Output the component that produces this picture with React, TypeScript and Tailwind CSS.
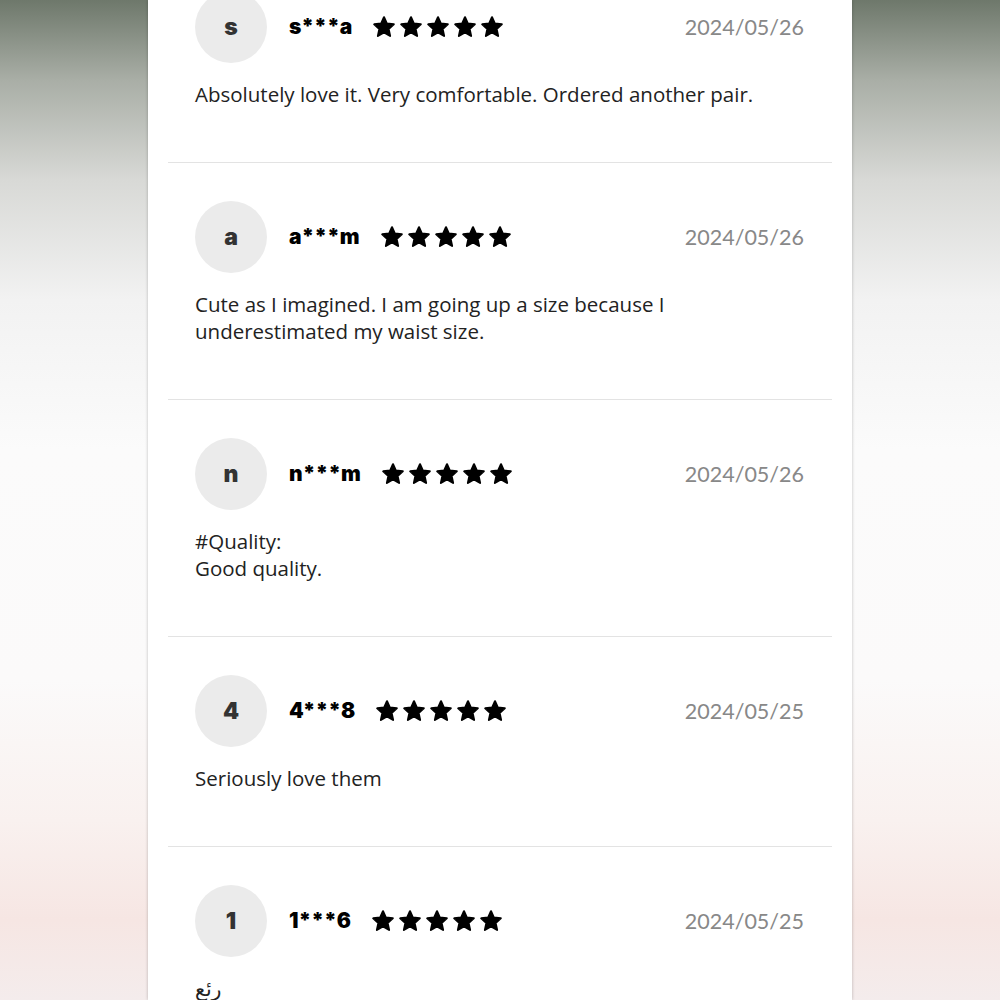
import React from 'react';

interface Review {
  initial: string;
  name: string;
  date: string;
  lines: string[];
  rtl?: boolean;
}

const reviews: Review[] = [
  { initial: 's', name: 's***a', date: '2024/05/26', lines: ['Absolutely love it. Very comfortable. Ordered another pair.'] },
  { initial: 'a', name: 'a***m', date: '2024/05/26', lines: ['Cute as I imagined. I am going up a size because I underestimated my waist size.'] },
  { initial: 'n', name: 'n***m', date: '2024/05/26', lines: ['#Quality:', 'Good quality.'] },
  { initial: '4', name: '4***8', date: '2024/05/25', lines: ['Seriously love them'] },
  { initial: '1', name: '1***6', date: '2024/05/25', lines: ['رئع'], rtl: true },
];

const Star = () => (
  <svg width="24" height="24" viewBox="0 0 24 24" className="shrink-0">
    <polygon
      points="12,2.2 14.9,8.6 21.8,9.3 16.6,14 18.1,20.9 12,17.4 5.9,20.9 7.4,14 2.2,9.3 9.1,8.6"
      fill="#000"
      stroke="#000"
      strokeWidth="2"
      strokeLinejoin="round"
    />
  </svg>
);

const ReviewItem = ({ review }: { review: Review }) => (
  <div className="mx-5 border-b border-[#e3e3e3] pl-[27px] pr-[28px] pt-[38px] pb-[54px]">
    <div className="flex items-center">
      <div className="w-[72px] h-[72px] rounded-full bg-[#ebebeb] flex items-center justify-center shrink-0">
        <span className="text-[23px] font-black text-[#333] font-['Inter',sans-serif]">{review.initial}</span>
      </div>
      <span className="ml-[22px] text-[21px] font-black text-black font-['Inter',sans-serif]">
        {review.name}
      </span>
      <div className="ml-[20px] flex items-center gap-[3px]">
        {[0, 1, 2, 3, 4].map((i) => (
          <Star key={i} />
        ))}
      </div>
      <span className="ml-auto text-[21.5px] text-[#888] font-['Lato',sans-serif]">{review.date}</span>
    </div>
    <div className="mt-[18px] text-[20.5px] leading-[27px] text-[#222] font-['Open_Sans','DejaVu_Sans',sans-serif]">
      {review.lines.map((line, i) => (
        <p key={i} dir={review.rtl ? 'auto' : undefined} className={review.rtl ? 'text-left' : ''}>
          {line}
        </p>
      ))}
    </div>
  </div>
);

export default function App() {
  return (
    <div className="w-full h-screen overflow-hidden bg-[linear-gradient(180deg,#6e786b_0%,#a9aea6_8%,#d8d9d6_18%,#f2f2f2_30%,#fbfbfb_45%,#fbfafa_68%,#f9f1ef_82%,#f6e6e3_92%,#f4ecec_100%)] flex justify-center">
      <div className="w-[704px] bg-white shadow-[0_0_3px_rgba(0,0,0,0.25)]">
        <div className="-mt-[47px]">
          {reviews.map((r) => (
            <ReviewItem key={r.name} review={r} />
          ))}
        </div>
      </div>
    </div>
  );
}
